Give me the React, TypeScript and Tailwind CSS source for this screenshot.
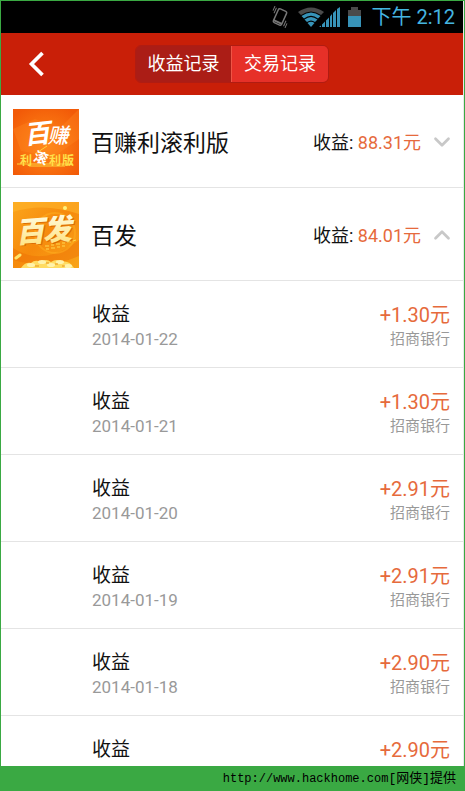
import { useState } from "react";
import { ChevronDown, ChevronLeft, ChevronUp } from "lucide-react";

const records = [
  { date: "2014-01-22", amount: "+1.30元", bank: "招商银行" },
  { date: "2014-01-21", amount: "+1.30元", bank: "招商银行" },
  { date: "2014-01-20", amount: "+2.91元", bank: "招商银行" },
  { date: "2014-01-19", amount: "+2.91元", bank: "招商银行" },
  { date: "2014-01-18", amount: "+2.90元", bank: "招商银行" },
  { date: "", amount: "+2.90元", bank: "" },
];

function StatusBar() {
  return (
    <div className="flex h-8 shrink-0 items-center justify-end bg-black pr-2 text-[#45b5e0]">
      {/* Vibrate */}
      <svg width="20" height="22" viewBox="0 0 20 22" fill="none" stroke="#777">
        <g transform="rotate(24 10 11)">
          <rect x="5.500" y="3.500" width="9" height="15" rx="1.500" strokeWidth="1.500" />
          <path d="M5.500 16.500h9" strokeWidth="2" />
          <path d="M3 4v6M1 3v5M17 12v6M19 14v5" strokeWidth="1" />
        </g>
      </svg>
      {/* Wifi and signal */}
      <svg className="ml-2" width="42" height="20" viewBox="0 0 42 20">
        <path d="M0 5Q13-4 26 5L23 8Q13 1 3 8Z" fill="#4a4a4a" />
        <path d="M3.500 9Q13 2 22.500 9L20 11.500Q13 6 6 11.500Z" fill="#3793b8" />
        <path d="M6.500 12.500Q13 7.500 19.500 12.500L17 15Q13 12 9 15Z" fill="#3793b8" />
        <path d="M9.500 16Q13 13.500 16.500 16L13 20Z" fill="#3793b8" />
        <path
          d="M24 17.500 27 14.500V20H24ZM28 13.500 31 10.500V20H28ZM32 9.500 34 7V20H32ZM35 6 38 3V20H35ZM39 2 42 0V20H39ZM21 20 23 18.500V20Z"
          fill="#3793b8"
        />
      </svg>
      {/* Battery */}
      <svg className="ml-2" width="13" height="20" viewBox="0 0 13 20">
        <path d="M3 0h7v3h3v6H0V3h3z" fill="#4a4a4a" />
        <path d="M0 9h13v11H0z" fill="#3793b8" />
      </svg>
      <span className="ml-2.5 whitespace-pre text-[20px] leading-8">下午 2:12</span>
    </div>
  );
}

function CompoundLogo() {
  return (
    <svg className="size-[66px] shrink-0" viewBox="0 0 66 66" role="img" aria-label="百赚利滚利版">
      <defs>
        <radialGradient id="compound-bg" cx="50%" cy="55%" r="65%">
          <stop offset="0" stopColor="#ff8a18" />
          <stop offset="1" stopColor="#f25a08" />
        </radialGradient>
      </defs>
      <rect width="66" height="66" fill="url(#compound-bg)" />
      <path d="M0 20 22 10 46 20 66 0V30L40 48 8 42Z" fill="#ff8a22" opacity="0.35" />
      <path d="M22 45 34 37M4 55h56M16 57h36" stroke="#ffd23c" strokeWidth="1" />
      <g fontWeight="700" textAnchor="middle">
        <text x="24" y="34" fontSize="26" fill="#fff" fontStyle="italic" transform="rotate(-6 24 24)">百</text>
        <text x="45" y="34" fontSize="21" fill="#fff" fontStyle="italic" fontWeight="500">赚</text>
        <text x="13" y="56" fontSize="12" fill="#ffe14a">利</text>
        <text x="28" y="54" fontSize="14" fill="#fff" transform="rotate(20 28 49)">滚</text>
        <text x="42" y="56" fontSize="12" fill="#ffe14a">利</text>
        <text x="55" y="56" fontSize="12" fill="#ffe14a">版</text>
      </g>
    </svg>
  );
}

function BaifaLogo() {
  return (
    <svg className="size-[66px] shrink-0" viewBox="0 0 66 66" role="img" aria-label="百发">
      <defs>
        <linearGradient id="baifa-bg" x1="0" y1="0" x2="1" y2="1">
          <stop offset="0" stopColor="#fba51c" />
          <stop offset="0.5" stopColor="#f68a0c" />
          <stop offset="1" stopColor="#f9a51a" />
        </linearGradient>
        <linearGradient id="baifa-text" x1="0" y1="0" x2="0" y2="1">
          <stop offset="0" stopColor="#fffbe0" />
          <stop offset="1" stopColor="#ffe27a" />
        </linearGradient>
      </defs>
      <rect width="66" height="66" fill="url(#baifa-bg)" />
      <path d="M0 10Q30 0 66 12V0H0Z" fill="#ffb52c" opacity="0.6" />
      <path d="M0 46Q30 66 66 38V54Q34 68 0 58Z" fill="#ee7206" opacity="0.5" />
      <circle cx="42" cy="31" r="20" fill="none" stroke="#ffb020" strokeWidth="2" opacity="0.5" />
      <circle cx="52" cy="6" r="2" fill="#fff27a" />
      <g fontWeight="900" textAnchor="middle" fontStyle="italic" transform="rotate(-4 30 28)">
        <text x="18" y="40" fontSize="29" fill="#d96a05">百</text>
        <text x="45" y="40" fontSize="29" fill="#d96a05">发</text>
        <text x="17" y="39" fontSize="29" fill="url(#baifa-text)">百</text>
        <text x="44" y="39" fontSize="29" fill="url(#baifa-text)">发</text>
      </g>
      <path
        d="M32 44h4M38 43h3M43 42h4M49 41h3M54 40h4M33 47h3M38 46h4M44 45h3M49 44h3M60 39l3-1"
        stroke="#ffd850"
        strokeWidth="1"
      />
      <path d="M3 56 7 53" stroke="#ffe36a" strokeWidth="3" strokeLinecap="round" />
      {/* Gold coins */}
      <path d="M8 66Q12 60 18 61 22 57 28 60 33 56 38 60 44 56 48 60 56 58 61 66Z" fill="#ffdc62" />
      <g fill="#fff3ac">
        <ellipse cx="18" cy="63" rx="4" ry="2" />
        <ellipse cx="29" cy="60" rx="4" ry="2" />
        <ellipse cx="38" cy="63" rx="4" ry="2" />
        <ellipse cx="47" cy="60" rx="4" ry="2" />
        <ellipse cx="55" cy="64" rx="4" ry="2" />
      </g>
      <path d="M22 64h4M33 61h3M42 62h3M49 64h3" stroke="#e89518" strokeWidth="1" />
    </svg>
  );
}

type ProductRowProps = {
  logo: React.ReactNode;
  name: string;
  total: string;
  open: boolean;
  onToggle: () => void;
};

function ProductRow({ logo, name, total, open, onToggle }: ProductRowProps) {
  const Chevron = open ? ChevronUp : ChevronDown;
  return (
    <button
      type="button"
      aria-expanded={open}
      onClick={onToggle}
      className="flex h-[93px] w-full shrink-0 items-center border-b border-[#e4e4e4] pt-0.5 pr-2 pl-3 text-left"
    >
      {logo}
      <span className="ml-3 flex-1 pt-1 text-[23px] leading-8">{name}</span>
      <span className="pt-0.5 text-[18px] leading-6">
        收益: <span className="text-[#e66a3c]">{total}</span>
      </span>
      <Chevron className="ml-2 size-[26px] text-[#c8c8c8]" strokeWidth={2.5} />
    </button>
  );
}

function RecordList() {
  return (
    <ul>
      {records.map((record, idx) => (
        <li
          key={idx}
          className="flex h-[87px] justify-between border-b border-[#e4e4e4] pt-[22px] pr-[13px] pl-[91px]"
        >
          <div>
            <p className="text-[19px] leading-6">收益</p>
            <p className="text-[17px] leading-6 text-[#999]">{record.date}</p>
          </div>
          <div className="text-right">
            <p className="text-[20px] leading-6 text-[#e66a3c]">{record.amount}</p>
            <p className="text-[15px] leading-6 text-[#999]">{record.bank}</p>
          </div>
        </li>
      ))}
    </ul>
  );
}

export default function App() {
  const [tab, setTab] = useState("income");
  const [opened, setOpened] = useState("baifa");

  const toggle = (id: string) => setOpened(opened === id ? "" : id);

  return (
    <div className="flex h-screen flex-col border border-b-0 border-[#3aa943] bg-white font-[Roboto,'Noto_Sans_CJK_SC',sans-serif] text-[#111]">
      <div className="flex min-h-0 flex-1 flex-col overflow-hidden border-r border-[#e8e8e8]">
        <StatusBar />

        <header className="grid h-[62px] shrink-0 grid-cols-[1fr_auto_1fr] items-center bg-[#c91f08] text-white">
          <button type="button" aria-label="返回" className="ml-3.5 w-10">
            <ChevronLeft className="size-11" strokeWidth={2} strokeLinecap="butt" strokeLinejoin="miter" />
          </button>
          <div className="flex overflow-hidden rounded-md border border-[#b01c12] text-[18px] leading-9">
            <button
              type="button"
              aria-pressed={tab === "income"}
              onClick={() => setTab("income")}
              className="w-24 border-r border-[#ee5546] bg-[#ab1d16]"
            >
              收益记录
            </button>
            <button
              type="button"
              aria-pressed={tab === "trade"}
              onClick={() => setTab("trade")}
              className="w-24 bg-[#e63028]"
            >
              交易记录
            </button>
          </div>
        </header>

        <main className="min-h-0 flex-1 overflow-hidden">
          <ProductRow
            logo={<CompoundLogo />}
            name="百赚利滚利版"
            total="88.31元"
            open={opened === "compound"}
            onToggle={() => toggle("compound")}
          />
          <ProductRow
            logo={<BaifaLogo />}
            name="百发"
            total="84.01元"
            open={opened === "baifa"}
            onToggle={() => toggle("baifa")}
          />
          {opened && <RecordList />}
        </main>
      </div>

      <footer className="flex h-[25px] shrink-0 items-center justify-end bg-[#3aa943] pr-2 text-black">
        <a
          href="http://www.hackhome.com"
          className="font-['Liberation_Mono','Noto_Sans_CJK_SC',monospace] text-[12px] leading-5"
        >
          http://www.hackhome.com<span className="text-[13px]">[网侠]提供</span>
        </a>
      </footer>
    </div>
  );
}
